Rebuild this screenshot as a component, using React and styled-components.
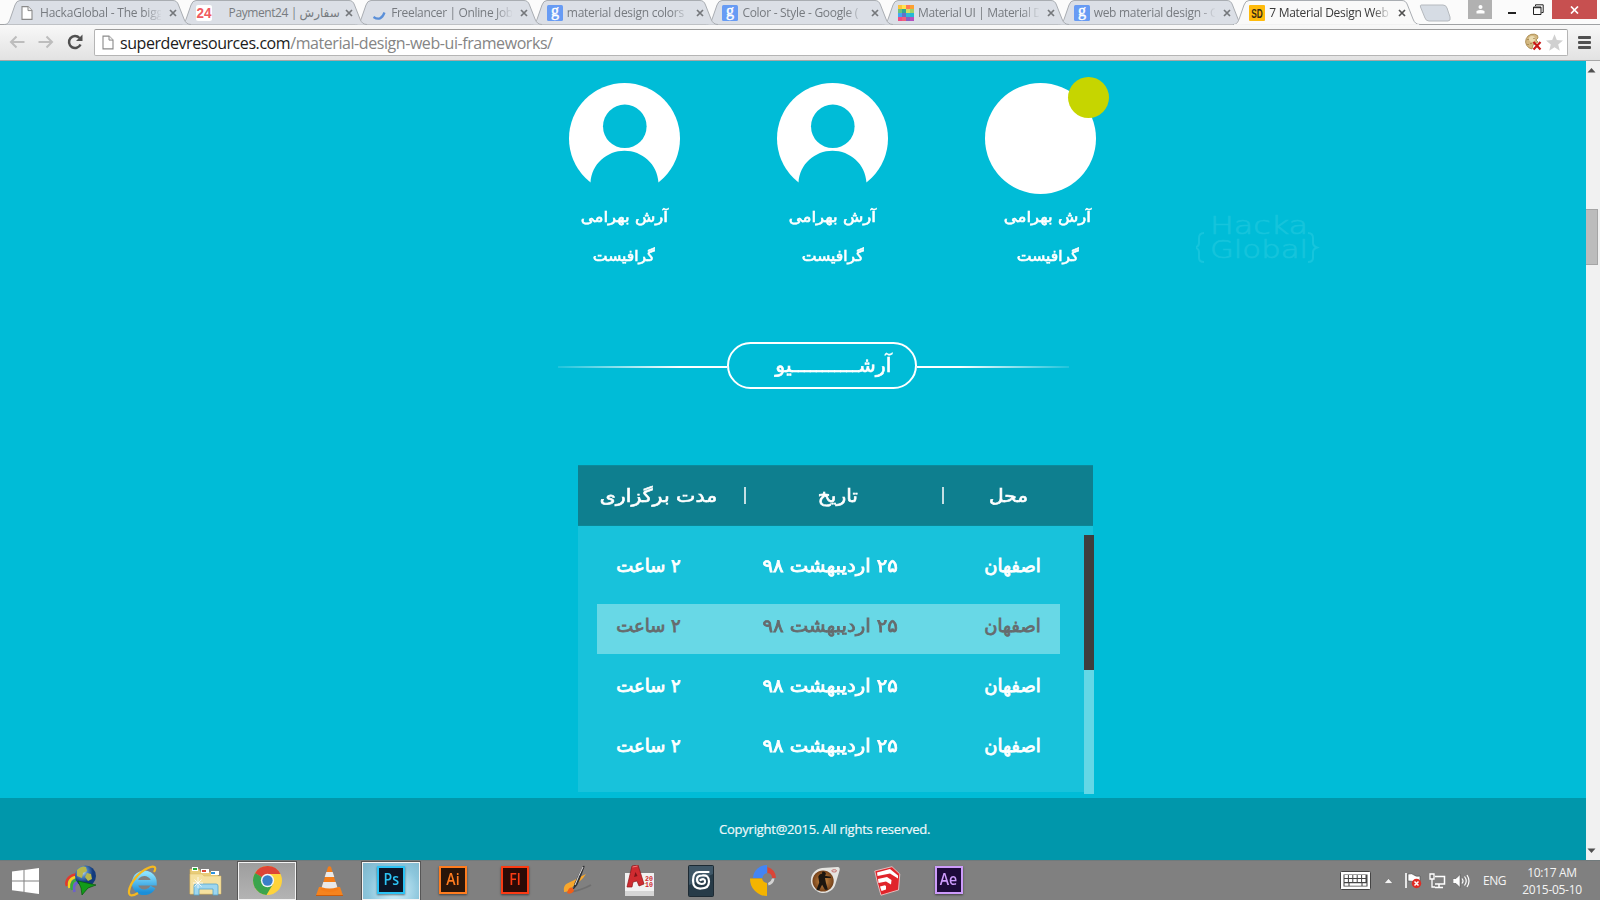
import React from "react";
import styled, { createGlobalStyle, css } from "styled-components";

const ui = `"Open Sans", "Noto Sans", "DejaVu Sans", sans-serif`;
const persian = `"DejaVu Sans", sans-serif`;

const GlobalStyle = createGlobalStyle`
  * { box-sizing: border-box; }
  body { margin: 0; overflow: hidden; background: #00bcd7; font-family: ${ui}; }
  svg { display: block; flex: none; }
`;

const Screen = styled.div`
  width: 1600px;
  height: 900px;
  display: flex;
  flex-direction: column;
  overflow: hidden;
`;

/* Browser chrome */
const TabStrip = styled.div`
  height: 25px;
  display: flex;
  align-items: flex-start;
  padding-left: 4px;
  background: #fbfbfb;
  border-bottom: 1px solid #a0a2a4;
  flex: none;
`;
const TabBox = styled.div`
  position: relative;
  isolation: isolate;
  z-index: ${(p) => p.$z};
  width: 186px;
  height: 25px;
  margin-right: -10.4px;
  padding: 1px 0 0 16px;
  display: flex;
  align-items: center;
  flex: none;
`;
const TabShape = styled.svg`
  position: absolute;
  left: 0;
  top: 0;
  z-index: -1;
`;
const TabTitle = styled.div`
  width: 121px;
  margin-left: 4px;
  padding-left: ${(p) => p.$indent || 0}px;
  white-space: nowrap;
  font-size: 12px;
  line-height: 20px;
  letter-spacing: ${(p) => p.$ls || 0}px;
  color: ${(p) => (p.$active ? "#3a3a3a" : "#777b80")};
  ${(p) => !p.$whole && css`mask-image: linear-gradient(90deg, #000 86%, transparent 101%);`}
`;
const CloseMark = styled.svg`
  margin-left: 8px;
`;
const NewTab = styled.svg`
  margin: 4px 0 0 10px;
`;
const WindowButtons = styled.div`
  display: flex;
  margin-left: auto;
  margin-right: 3px;
`;
const WinButton = styled.div`
  width: ${(p) => p.$w}px;
  height: 19px;
  margin-right: ${(p) => p.$mr || 0}px;
  display: flex;
  align-items: center;
  justify-content: center;
  background: ${(p) => p.$bg || "transparent"};
`;
const Toolbar = styled.div`
  height: 36px;
  flex: none;
  display: flex;
  align-items: center;
  padding: 0 8px 1px 9px;
  background: linear-gradient(#f8f8f8, #e2e2e2);
  border-bottom: 1px solid #a7a7a7;
`;
const NavIcons = styled.div`
  display: flex;
  gap: 13px;
  width: 85px;
`;
const AddressBar = styled.div`
  width: 1474px;
  height: 27px;
  display: flex;
  align-items: center;
  padding: 0 4px 0 7px;
  background: #fff;
  border: 1px solid #b5b5b5;
  border-top-color: #9c9c9c;
  border-radius: 2px;
`;
const Url = styled.div`
  flex: 1;
  margin-left: 6px;
  padding-top: 1px;
  font-size: 16px;
  line-height: 22px;
  letter-spacing: -0.43px;
  color: #858585;
  b { font-weight: 400; color: #1b1b1b; }
`;
const Menu = styled.div`
  width: 13px;
  margin-left: 10px;
  display: grid;
  gap: 2px;
  i { height: 3px; background: #505050; border-radius: 1px; }
`;

/* Page */
const Viewport = styled.div`
  height: 799px;
  display: flex;
  flex: none;
`;
const Page = styled.main`
  width: 1586px;
  display: flex;
  flex-direction: column;
  background: #00bcd7;
`;
const ScrollBar = styled.div`
  width: 14px;
  background: #f1f1f1;
  display: flex;
  flex-direction: column;
  justify-content: space-between;
  padding: 6px 0 6px;
`;
const ScrollThumb = styled.div`
  width: 12px;
  height: 56px;
  margin-top: 136px;
  margin-bottom: auto;
  background: #bcbcbc;
  border: 1px solid #a5a5a5;
  border-left: 0;
`;
const Top = styled.div`
  display: flex;
  height: 281px;
  padding: 22px 0 0 520px;
`;
const Member = styled.div`
  width: 208px;
  display: flex;
  flex-direction: column;
  align-items: center;
  position: relative;
`;
const Badge = styled.span`
  position: absolute;
  top: -6px;
  left: 132px;
  width: 41px;
  height: 41px;
  border-radius: 50%;
  background: #c6d500;
`;
const Fa = styled.span`
  display: inline-block;
  direction: rtl;
  white-space: nowrap;
  font-family: ${persian};
  font-size: ${(p) => p.$size}px;
  line-height: 30px;
  color: ${(p) => p.$color || "#fff"};
  -webkit-text-stroke: ${(p) => p.$stroke || 0.6}px currentColor;
  transform: scaleX(${(p) => p.$sx || 1});
`;
const MemberText = styled.div`
  display: flex;
  flex-direction: column;
  align-items: center;
  gap: 9px;
  margin-top: 8px;
  padding-left: ${(p) => p.$shift}px;
`;
const Watermark = styled.svg`
  margin: 127px 0 0 52px;
`;
const Divider = styled.div`
  display: flex;
  align-items: center;
  height: 47px;
  padding-left: 558px;
`;
const Rule = styled.i`
  width: ${(p) => p.$w}px;
  height: 2px;
  margin-top: 3px;
  background: linear-gradient(${(p) => p.$dir}, rgba(255, 255, 255, 0.12), #fff 72%);
`;
const Pill = styled.div`
  width: 190px;
  height: 47px;
  padding-left: 22px;
  padding-bottom: 2px;
  display: flex;
  justify-content: center;
  align-items: center;
  border: 2px solid #fff;
  border-radius: 24px;
`;
const Table = styled.section`
  width: 515px;
  margin: 76px 0 0 578px;
`;
const TableHead = styled.div`
  height: 61px;
  display: flex;
  align-items: center;
  background: #0e7f8f;
  border-top: 1px solid #0b8a9c;
  border-bottom: 1px solid #0b8797;
`;
const Cell = styled.div`
  width: ${(p) => p.$w}px;
  padding-left: ${(p) => p.$pl || 0}px;
  flex: none;
  display: flex;
  justify-content: center;
`;
const Sep = styled.div`
  width: ${(p) => p.$w}px;
  display: flex;
  justify-content: center;
  &::before { content: ""; width: 2px; height: 17px; background: #c4dfe3; }
`;
const TableBody = styled.div`
  height: 266px;
  display: flex;
  justify-content: space-between;
  background: #18c2db;
`;
const Rows = styled.div`
  width: 463px;
  margin: 18px 0 0 19px;
  display: flex;
  flex-direction: column;
  gap: 10px;
`;
const Row = styled.div`
  height: 50px;
  display: flex;
  align-items: center;
  padding-bottom: 6px;
  ${(p) => p.$on && css`background: #68d8e6;`}
`;
const Track = styled.div`
  width: 10px;
  height: 259px;
  margin: 9px -1px 0 0;
  background: #64d7e6;
  &::before { content: ""; display: block; height: 135px; background: #3e3e3e; }
`;
const Footer = styled.footer`
  margin-top: auto;
  height: 62px;
  display: flex;
  align-items: center;
  padding: 0 0 1px 719px;
  background: #0097ab;
  color: #eef8fa;
  font: 500 13px ${ui};
  letter-spacing: -0.23px;
  -webkit-text-stroke: 0.2px currentColor;
`;

/* Taskbar */
const TaskBar = styled.div`
  height: 40px;
  display: flex;
  align-items: stretch;
  background: #808080;
  border-top: 1px solid #707a7c;
  flex: none;
`;
const Start = styled.div`
  width: 50px;
  display: flex;
  align-items: center;
  justify-content: center;
`;
const Task = styled.div`
  width: 62px;
  display: flex;
  justify-content: center;
  align-items: center;
`;
const TaskFrame = styled.div`
  width: 60px;
  height: 40px;
  display: flex;
  align-items: center;
  justify-content: center;
  border: 1px solid #565656;
  box-shadow: inset 0 0 0 1px #f3f3f3;
  background: ${(p) => p.$bg};
`;
const AdobeTile = styled.div`
  width: 28px;
  height: 28px;
  margin-bottom: 2px;
  display: flex;
  justify-content: center;
  align-items: center;
  border: 2px solid ${(p) => p.$c};
  background: ${(p) => p.$bg};
  color: ${(p) => p.$c};
  box-shadow: 0 1px 2px rgba(0, 0, 0, 0.5);
  font: 600 17px/22px ${ui};
  padding-bottom: 2px;
  span { transform: scaleX(0.83); }
`;
const Tray = styled.div`
  margin-left: auto;
  width: 260px;
  display: flex;
  align-items: center;
  color: #f4f4f4;
  font-size: 12px;
`;
const Lang = styled.div`
  width: 25px;
  margin-left: 13px;
  letter-spacing: -0.45px;
`;
const Clock = styled.div`
  width: 70px;
  margin-left: 9px;
  text-align: center;
  line-height: 17px;
  letter-spacing: -0.3px;
`;
const Gap = styled.span`
  margin-left: ${(p) => p.$g}px;
`;

const PageIcon = ({ w = 12, h = 14 }) => (
  <svg width={w} height={h} viewBox="0 0 12 14">
    <path d="M1 .6h6l4 4v8.8H1z" fill="#fff" stroke="#8a8a8a" strokeWidth="1.1" />
    <path d="M7 .6v4h4" fill="#eee" stroke="#8a8a8a" />
  </svg>
);
const GoogleIcon = () => (
  <svg width="16" height="16" viewBox="0 0 16 16">
    <rect width="16" height="16" rx="1.5" fill="#679bf4" />
    <text x="8" y="11.4" textAnchor="middle" fontSize="16" fontFamily="Liberation Serif, serif" fill="#fff" stroke="#fff" strokeWidth=".4">g</text>
  </svg>
);
const SpinnerIcon = () => (
  <svg width="15" height="16" viewBox="0 0 15 16">
    <path d="M1.500 12Q9 17 12.500 7.500" fill="none" stroke="#5a8fd8" strokeWidth="2.2" />
  </svg>
);
const PayIcon = () => (
  <svg width="16" height="16" viewBox="0 0 16 16">
    <rect width="16" height="16" rx="2" fill="#fff" />
    <text x="8" y="13.2" textAnchor="middle" textLength="15" lengthAdjust="spacingAndGlyphs" fontSize="15" fontWeight="700" fontFamily="Liberation Sans, sans-serif" fill="#ef5a5e">24</text>
  </svg>
);
const swatches = ["#fcc238", "#ffe34f", "#ff7a50", "#fda030", "#6cc37c", "#2fa797", "#d3df60", "#a0d168", "#43a6f2", "#6571c8", "#31bbd5", "#25b8d4", "#ee4b85", "#f0607c", "#8a5fc0", "#b44fc0"];
const SwatchIcon = () => (
  <svg width="16" height="16" viewBox="0 0 16 16">
    {swatches.map((c, i) => <rect key={i} x={(i % 4) * 4} y={Math.floor(i / 4) * 4} width="4" height="4" fill={c} />)}
  </svg>
);
const SdIcon = () => (
  <svg width="16" height="16" viewBox="0 0 16 16">
    <rect width="16" height="16" rx="1" fill="#ffbb0c" />
    <text x="8" y="12.6" textAnchor="middle" textLength="11.5" lengthAdjust="spacingAndGlyphs" fontSize="13" fontWeight="700" fontFamily="Liberation Sans, sans-serif" fill="#392d12">SD</text>
  </svg>
);

const tabs = [
  { icon: <PageIcon />, title: "HackaGlobal - The bigg", lead: 1, ls: -0.22 },
  { icon: <PayIcon />, title: "Payment24 | سفارش", indent: 13, ls: -0.42, whole: true },
  { icon: <SpinnerIcon />, title: "Freelancer | Online Job", lead: 1, ls: -0.35 },
  { icon: <GoogleIcon />, title: "material design colors", ls: -0.28 },
  { icon: <GoogleIcon />, title: "Color - Style - Google (", ls: -0.3 },
  { icon: <SwatchIcon />, title: "Material UI | Material D", ls: -0.35 },
  { icon: <GoogleIcon />, title: "web material design - G", ls: -0.3 },
  { icon: <SdIcon />, title: "7 Material Design Web", active: true, ls: -0.3 },
];
const IconSlot = styled.span`
  width: ${(p) => 16 - p.$lead}px;
  margin-left: ${(p) => p.$lead}px;
  display: flex;
  flex: none;
`;

function Tab({ icon, title, active, index, indent, lead = 0, ls, whole }) {
  return (
    <TabBox $z={active ? 20 : 10 - index}>
      <TabShape width="188" height="25">
        <path
          d="M0 24.5C4 24.5 5 22 6.500 18L11 5Q12.500 .5 16 .5H169Q173 .5 174.500 5L180 19Q182 24.500 187 24.500"
          fill={active ? "#f9f9f9" : "#dbdfe6"} stroke="#a9adb2" />
        {active && <path d="M1 24.700H186" stroke="#f9f9f9" />}
      </TabShape>
      <IconSlot $lead={lead}>{icon}</IconSlot>
      <TabTitle $active={active} $indent={indent} $ls={ls} $whole={whole}>{title}</TabTitle>
      <CloseMark width="8" height="8" viewBox="0 0 8 8">
        <path d="M1 1l6 6M7 1L1 7" stroke={active ? "#505050" : "#74777b"} strokeWidth="1.7" />
      </CloseMark>
    </TabBox>
  );
}

function Person({ blank, shift = 0 }) {
  return (
    <Member>
      <svg width="111" height="111" viewBox="0 0 111 111">
        <circle cx="55.5" cy="55.5" r="55.5" fill="#fff" />
        {!blank && <>
          <ellipse cx="55.8" cy="43.3" rx="21.8" ry="21.8" fill="#00bcd7" />
          <path d="M21.500 99.800C22.500 81 38 67.800 55.500 67.800S88.500 81 89.500 99.800L93 111H18Z" fill="#00bcd7" />
        </>}
      </svg>
      {blank && <Badge />}
      <MemberText $shift={shift}>
        <Fa $size={15} $sx={1.11}>آرش بهرامی</Fa>
        <Fa $size={15} $sx={1.04}>گرافیست</Fa>
      </MemberText>
    </Member>
  );
}

const events = [false, true, false, false];

const WindowsLogo = () => (
  <svg width="27" height="26" viewBox="0 0 27 26">
    <path d="M0 3.600L11.500 2v10.400H0zM12.500 1.900L27 0v12.400H12.500zM0 13.400h11.500v10.400L0 22.300zM12.500 13.400H27V26l-14.500-2z" fill="#fff" />
  </svg>
);
const IdmIcon = () => (
  <svg width="32" height="31" viewBox="0 0 32 31">
    <defs><radialGradient id="globe" cx=".35" cy=".3"><stop stopColor="#d7e6ee" /><stop offset=".5" stopColor="#4d82be" /><stop offset="1" stopColor="#123a7c" /></radialGradient></defs>
    <path d="M14 9C3 10 0 16 2 21" fill="none" stroke="#e3392b" strokeWidth="2.600" />
    <path d="M14 11.500C5 12 3 17 4.500 23" fill="none" stroke="#f5d320" strokeWidth="2.600" />
    <path d="M14 14C7 15 5.500 20 7 25" fill="none" stroke="#35ad3c" strokeWidth="2.600" />
    <path d="M15 16.500C9 18 8 22 9.500 27" fill="none" stroke="#6c5fd0" strokeWidth="2.600" />
    <circle cx="20.500" cy="11" r="10.500" fill="url(#globe)" />
    <path d="M12 5q5-5 9-3l1 4-4 2-1 5-5-2zM22 8l4 1 1 5-4 2-3-4z" fill="#b8b64b" />
    <path d="M13 16L31 20l-8 3-6 7-1-7z" fill="#129c1a" stroke="#07570c" strokeWidth=".7" />
  </svg>
);
const IeIcon = () => (
  <svg width="32" height="32" viewBox="0 0 32 32">
    <defs><linearGradient id="ie" x2="0" y2="1"><stop stopColor="#8be2ff" /><stop offset="1" stopColor="#1b8fd8" /></linearGradient></defs>
    <path d="M26 22A9.700 9.500 0 1 1 27 17.700H10" fill="none" stroke="url(#ie)" strokeWidth="5.500" />
    <path d="M27 7C30 2 27 0 21 3C12 7 3 18 2 26C1.500 32 6 31 11 28" fill="none" stroke="#f6b91f" strokeWidth="2.200" />
  </svg>
);
const ExplorerIcon = () => (
  <svg width="33" height="30" viewBox="0 0 33 30">
    <path d="M1 3h9l2 3h17v22H1z" fill="#e9cd79" stroke="#c9a64c" strokeWidth=".6" />
    <path d="M3 1h6v4H3zM12 3h8v4h-8zM22 5h8v4h-8z" fill="#fff" />
    <path d="M4 2h4v2H4z" fill="#27aa3a" /><path d="M13 4h4v2h-4z" fill="#d94a37" /><path d="M22 6h4v2h-4z" fill="#2c92df" />
    <path d="M1 8h12l2 2h17v18H1z" fill="#f5e1a0" stroke="#d9ba64" strokeWidth=".5" />
    <path d="M5 29V20q0-2 2-2h20q2 0 2 2v9h-5v-6H10v6z" fill="#9dd6ef" stroke="#53a3cb" strokeWidth=".8" />
    <path d="M9 11v11M4 17h10M5.500 13.500l7 7M12.500 13.500l-7 7" stroke="#fff" strokeWidth=".8" />
  </svg>
);
const ChromeIcon = () => (
  <svg width="29" height="29" viewBox="0 0 28 28">
    <circle cx="14" cy="14" r="14" fill="#ffd33b" />
    <path d="M14 14L1.900 7A14 14 0 0 1 26.500 7.700H14z" fill="#dd4436" />
    <path d="M1.900 7A14 14 0 0 0 13 28l6.200-10.500L14 14z" fill="#3ba44d" />
    <path d="M14 14L1.900 7l5.500 10.200z" fill="#3ba44d" />
    <circle cx="14" cy="14" r="6.400" fill="#f4f4f4" /><circle cx="14" cy="14" r="5" fill="#3b7fc9" />
  </svg>
);
const VlcIcon = () => (
  <svg width="27" height="30" viewBox="0 0 27 30">
    <path d="M3 21h21l3 8.500H0z" fill="#f5831e" />
    <path d="M12 1q1.500-1.500 3 0l7 23q-8 4-17 0z" fill="#f47d18" />
    <path d="M10.300 6h6.400l1.600 5H8.700zM7.300 16h12.400l1.700 5.200q-8 2.800-15.700 0z" fill="#e9e9e9" />
    <path d="M0 29.500h27" stroke="#ca5c0a" />
  </svg>
);
const BrushIcon = () => (
  <svg width="30" height="31" viewBox="0 0 30 31">
    <path d="M8 27Q20 25 29 20" stroke="#5c5c5c" strokeWidth="2" opacity=".45" fill="none" />
    <path d="M2 26C1 17 9 18 14 14T24 9C20 15 18 16 13 20C8 23 9 27 2 27z" fill="#f8a72c" />
    <path d="M5 28q2-7 6-5l1 3q-3 4-7 2z" fill="#f05d18" />
    <path d="M11 24q1-6 4-11L21 1q2-1 1.500 1L18 14q-2 6-6 10z" fill="#303236" />
    <path d="M13 20q3-8 8-18" stroke="#e0e0e0" strokeWidth="1" fill="none" />
  </svg>
);
const AutoCadIcon = () => (
  <svg width="29" height="32" viewBox="0 0 29 32">
    <path d="M0 8h29v23H0z" fill="#f1f1f1" />
    <path d="M0 26h29v5H0z" fill="#d5d5d5" />
    <path d="M2 22L7 1l6-1 6 19-5 2-2-5-4 1-1 5z" fill="#cf2b30" stroke="#8c1419" strokeWidth=".7" />
    <path d="M9 12l1.500-5L12.500 11z" fill="#7d1418" /><path d="M7.500 2l5-1" stroke="#f27b79" />
    <text x="20" y="15.500" fontSize="7.500" fontWeight="700" fontFamily="Liberation Mono, monospace" textLength="8" lengthAdjust="spacingAndGlyphs" fill="#d02a2e">20</text>
    <text x="20" y="22" fontSize="7.500" fontWeight="700" fontFamily="Liberation Mono, monospace" textLength="8" lengthAdjust="spacingAndGlyphs" fill="#d02a2e">10</text>
  </svg>
);
const MaxIcon = () => (
  <svg width="26" height="32" viewBox="0 0 26 32">
    <rect x=".5" y=".5" width="25" height="31" rx="1" fill="#273b48" stroke="#1d2a33" />
    <path d="M1 1h24v8L1 20z" fill="#5d7b8d" opacity=".45" />
    <path d="M20.500 7H11Q5 7 5 15.500T13 23.500Q21 23.500 21 16.500T14 10.500Q9 10.500 9 14.500T13.500 19Q17.500 19 17 16T12.500 15" fill="none" stroke="#fff" strokeWidth="2.200" strokeLinecap="round" />
  </svg>
);
const RingIcon = () => (
  <svg width="27" height="31" viewBox="0 0 27 31">
    <path d="M3 13A14 13.500 0 0 1 17 0v8q-4 1-4.500 5z" fill="#4385f4" />
    <path d="M17.500 2A11 11 0 0 1 26 13H22a5 5 0 0 0-4.500-5z" fill="#da4537" />
    <path d="M24.500 13.500a8 8 0 0 1-6 7L18 18q3-1 4-4.500z" fill="#d2d2d2" />
    <path d="M0 13.500h12q1 4 5 4.500V31A17 17 0 0 1 0 13.500z" fill="#f4b400" />
  </svg>
);
const CsIcon = () => (
  <svg width="31" height="28" viewBox="0 0 31 29">
    <defs><radialGradient id="cs"><stop stopColor="#d3934a" /><stop offset="1" stopColor="#74411a" /></radialGradient></defs>
    <path d="M12 1L28 0q3 0 2 4L26 17A13 13 0 1 1 12 1z" fill="#e5e4e0" />
    <circle cx="13" cy="14.500" r="11" fill="url(#cs)" />
    <path d="M12 5q3-1 4 2l-1 2 6 1v1.500h-6l1 5 2 7h-3l-3-5-3 5.500H6l3-8-1-6q1-3 4-3z" fill="#1d160f" />
    <ellipse cx="24.500" cy="4" rx="2.500" ry="1.200" fill="none" stroke="#ba5151" strokeWidth=".8" />
  </svg>
);
const SketchUpIcon = () => (
  <svg width="27" height="30" viewBox="0 0 27 30">
    <path d="M.800 5L18 .700l7.800 7.300L24.500 24 7 29.200 3.500 17z" fill="#e0242a" stroke="#f5d3d3" strokeWidth=".8" />
    <path d="M3 6.500L16 3l8 6.500v3L16 7.500 3.500 10z" fill="#fff" />
    <path d="M4 13l9-2 4.500 3-.5 4.500-5-3-7.500 1.500z" fill="#fff" />
    <path d="M6 20.500l5-1.200 1 1v3.200L7.500 25z" fill="#fff" />
  </svg>
);

const Adobe = ({ c, bg, children }) => <AdobeTile $c={c} $bg={bg}><span>{children}</span></AdobeTile>;

const taskIcons = [
  <IdmIcon />, <IeIcon />, <ExplorerIcon />,
  <TaskFrame $bg="linear-gradient(#9d9d9d,#b4b4b4)"><ChromeIcon /></TaskFrame>,
  <VlcIcon />,
  <TaskFrame $bg="radial-gradient(circle at 55% 75%,#d9f5ff,#8cc6dc 60%,#7db4c9)"><Adobe c="#2cc3f5" bg="#0b1526">Ps</Adobe></TaskFrame>,
  <Adobe c="#ff7c1f" bg="#2a1509">Ai</Adobe>,
  <Adobe c="#fb3b14" bg="#2c0a06">Fl</Adobe>,
  <BrushIcon />, <AutoCadIcon />, <MaxIcon />, <RingIcon />, <CsIcon />, <SketchUpIcon />,
  <Adobe c="#cd9bfb" bg="#1d0a3a">Ae</Adobe>,
];

export default function App() {
  return (
    <Screen>
      <GlobalStyle />
      <TabStrip>
        {tabs.map((t, i) => <Tab key={i} index={i} {...t} />)}
        <NewTab width="33" height="18" viewBox="0 0 33 18">
          <path d="M2 1H24Q27 1 28 4l3 9q1 4-2 4H10Q7 17 6 14L1.500 3Q1 1 2 1z" fill="#d6dce4" stroke="#b5b9be" />
        </NewTab>
        <WindowButtons>
          <WinButton $w={24} $bg="#b1b1b1">
            <svg width="9" height="9" viewBox="0 0 9 9"><circle cx="4.500" cy="2" r="2" fill="#fff" /><path d="M.500 8.500V6q4-2 8 0v2.500z" fill="#fff" /></svg>
          </WinButton>
          <WinButton $w={40}><svg width="8" height="10"><path d="M0 8h8" stroke="#222" strokeWidth="2" /></svg></WinButton>
          <WinButton $w={12} $mr={8}>
            <svg width="11" height="11" viewBox="0 0 11 11"><path d="M2.500 2V.800H10.200V8.500H8.500M.500 3h7.500v7.500H.500zM.500 3.700h7.500" fill="none" stroke="#222" /></svg>
          </WinButton>
          <WinButton $w={45} $bg="#c75050">
            <svg width="9" height="8" viewBox="0 0 9 8"><path d="M1 .500l7 7M8 .500l-7 7" stroke="#fff" strokeWidth="1.700" /></svg>
          </WinButton>
        </WindowButtons>
      </TabStrip>
      <Toolbar>
        <NavIcons>
          <svg width="16" height="16" viewBox="0 0 16 16"><path d="M15.500 8H2M7.500 2.500L2 8l5.500 5.500" fill="none" stroke="#bdbdbd" strokeWidth="2" /></svg>
          <svg width="16" height="16" viewBox="0 0 16 16"><path d="M.500 8H14M8.500 2.500L14 8l-5.500 5.500" fill="none" stroke="#bdbdbd" strokeWidth="2" /></svg>
          <svg width="16" height="16" viewBox="0 0 16 16"><path d="M13.500 10.500A6 6 0 1 1 12.500 4" fill="none" stroke="#505050" strokeWidth="2.500" /><path d="M15.500 .500V7H9z" fill="#505050" /></svg>
        </NavIcons>
        <AddressBar>
          <PageIcon w={12} h={15} />
          <Url><b>superdevresources.com</b>/material-design-web-ui-frameworks/</Url>
          <svg width="18" height="18" viewBox="0 0 18 18">
            <path d="M13.500 2.500A7.500 7.500 0 1 0 8 16l1-4 5-3-2-2 2-2z" fill="#d3b881" stroke="#a58446" strokeWidth=".8" />
            <circle cx="8" cy="6" r="3" fill="#eadbb0" /><path d="M4 6v1M7 10v1M10 5v1M4 11v1" stroke="#866431" />
            <path d="M9.500 9l7 7.500M16.500 9l-7 7.500" stroke="#c91717" strokeWidth="2.200" />
          </svg>
          <Gap $g={4} />
          <svg width="17" height="17" viewBox="0 0 17 17"><path d="M8.500 .300l2.300 5.700 6.200.400-4.800 4 1.600 6.300-5.300-3.500-5.300 3.500 1.600-6.300L0 6.400 6.200 6z" fill="#d0d0d0" /></svg>
        </AddressBar>
        <Menu><i /><i /><i /></Menu>
      </Toolbar>

      <Viewport>
        <Page>
          <Top>
            <Person shift={0} />
            <Person shift={1} />
            <Person blank shift={15} />
            <Watermark width="126" height="56" viewBox="0 0 126 56" fontFamily="DejaVu Sans, sans-serif" fontWeight="200" fill="#16c4dc" stroke="#16c4dc" strokeWidth=".7">
              <text x="14" y="24" fontSize="25" textLength="98" lengthAdjust="spacingAndGlyphs">Hacka</text>
              <text x="14" y="48" fontSize="25" textLength="98" lengthAdjust="spacingAndGlyphs">Global</text>
              <path d="M8 23Q3 23 3 28V33Q3 36 -.500 37.500Q3 39 3 42V48Q3 52 8 52M112 23Q117 23 117 28V33Q117 36 121 37.500Q117 39 117 42V48Q117 52 112 52" fill="none" strokeWidth="2" />
            </Watermark>
          </Top>
          <Divider>
            <Rule $w={169} $dir="90deg" />
            <Pill><Fa $size={20} $sx={1.03}>آرشـــــــــــیو</Fa></Pill>
            <Rule $w={152} $dir="270deg" />
          </Divider>
          <Table>
            <TableHead>
              <Cell $w={161}><Fa $size={18} $sx={1.14}>مدت برگزاری</Fa></Cell>
              <Sep $w={11} />
              <Cell $w={175}><Fa $size={18} $sx={1.12}>تاریخ</Fa></Cell>
              <Sep $w={36} />
              <Cell $w={94}><Fa $size={18} $sx={1.12}>محل</Fa></Cell>
            </TableHead>
            <TableBody>
              <Rows>
                {events.map((on, i) => (
                  <Row key={i} $on={on}>
                    <Cell $w={103}><Fa $size={18} $stroke={0.8} $color={on && "#666b6d"}>۲ ساعت</Fa></Cell>
                    <Cell $w={261}><Fa $size={18} $stroke={0.8} $sx={1.09} $color={on && "#666b6d"}>۲۵ اردیبهشت ۹۸</Fa></Cell>
                    <Cell $w={99} $pl={4}><Fa $size={18} $stroke={0.8} $color={on && "#666b6d"}>اصفهان</Fa></Cell>
                  </Row>
                ))}
              </Rows>
              <Track />
            </TableBody>
          </Table>
          <Footer>Copyright@2015. All rights reserved.</Footer>
        </Page>
        <ScrollBar>
          <svg width="10" height="6" viewBox="0 0 10 6"><path d="M1.500 5.500L5.500 1l4 4.500z" fill="#505050" /></svg>
          <ScrollThumb />
          <svg width="10" height="6" viewBox="0 0 10 6"><path d="M1.500 .500L5.500 5l4-4.500z" fill="#505050" /></svg>
        </ScrollBar>
      </Viewport>

      <TaskBar>
        <Start><WindowsLogo /></Start>
        {taskIcons.map((icon, i) => <Task key={i}>{icon}</Task>)}
        <Tray>
          <svg width="31" height="19" viewBox="0 0 31 19">
            <rect x=".500" y=".500" width="30" height="18" rx="1" fill="#fff" stroke="#444" />
            <rect x="3.500" y="3.500" width="24" height="12" fill="#444" />
            <path d="M4.500 5.500h22M4.500 9.500h22" stroke="#fff" strokeWidth="3" strokeDasharray="3.400 1" />
            <path d="M4.500 13.500h4M9.500 13.500h12M22.500 13.500h4" stroke="#fff" strokeWidth="2.500" />
          </svg>
          <Gap $g={13} />
          <svg width="9" height="6" viewBox="0 0 9 6"><path d="M0 5.500L4.500 .500 9 5.500z" fill="#f3f3f3" stroke="#555" strokeWidth=".5" /></svg>
          <Gap $g={12} />
          <svg width="17" height="17" viewBox="0 0 17 17">
            <path d="M1 1v15" stroke="#fff" strokeWidth="1.600" /><path d="M3 2q4-1 6 1t6 1v7q-4 0-6-1t-6-1z" fill="#fff" stroke="#444" strokeWidth=".6" />
            <circle cx="11.500" cy="11.500" r="4.700" fill="#df2b24" /><path d="M9.500 9.500l4 4M13.500 9.500l-4 4" stroke="#fff" strokeWidth="1.500" />
          </svg>
          <Gap $g={7} />
          <svg width="17" height="16" viewBox="0 0 17 16">
            <path d="M6 3.500h9.500v7.500H6M10 11v3M6 14.500h8" fill="none" stroke="#fff" strokeWidth="1.500" />
            <path d="M1 1h4v5H1zM3 6v8h3" fill="#777" stroke="#fff" strokeWidth="1.300" />
          </svg>
          <Gap $g={7} />
          <svg width="17" height="16" viewBox="0 0 17 16">
            <path d="M0 5.500h3L7 1.500v13L3 10.500H0z" fill="#fff" stroke="#444" strokeWidth=".5" />
            <path d="M9 5.500q2 2.500 0 5M11.500 3.500q3.500 4.500 0 9M14 2q4 6 0 12" fill="none" stroke="#fff" strokeWidth="1.200" />
          </svg>
          <Lang>ENG</Lang>
          <Clock>10:17 AM<br />2015-05-10</Clock>
        </Tray>
      </TaskBar>
    </Screen>
  );
}
